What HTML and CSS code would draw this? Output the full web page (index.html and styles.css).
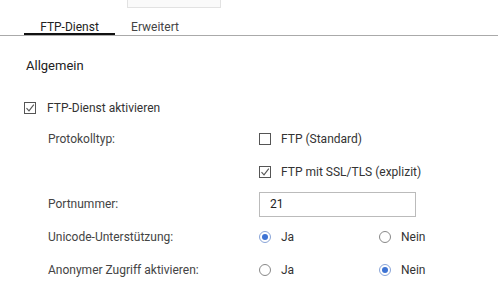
FILE: index.html
```html
<!DOCTYPE html>
<html lang="de">
<head>
  <meta charset="UTF-8">
  <title>FTP-Dienst</title>
  <link rel="stylesheet" href="styles.css">
</head>
<body>
  <div class="top-box"></div>

  <div class="tabs">
    <div class="tab active">FTP-Dienst</div>
    <div class="tab second">Erweitert</div>
  </div>

  <h3 class="section-title">Allgemein</h3>

  <label class="check main-check">
    <svg class="box" width="12" height="12" viewBox="0 0 12 12"><rect x="0.5" y="0.5" width="11" height="11" fill="#fff" stroke="#555"/><path d="M2.5 6.2 L5 8.8 L9.8 2.6" fill="none" stroke="#555" stroke-width="1.1"/></svg>
    <span>FTP-Dienst aktivieren</span>
  </label>

  <div class="form">
    <div class="label">Protokolltyp:</div>
    <div class="control">
      <label class="check">
        <svg class="box" width="12" height="12" viewBox="0 0 12 12"><rect x="0.5" y="0.5" width="11" height="11" fill="#fff" stroke="#555"/></svg>
        <span>FTP (Standard)</span>
      </label>
    </div>

    <div class="label"></div>
    <div class="control">
      <label class="check">
        <svg class="box" width="12" height="12" viewBox="0 0 12 12"><rect x="0.5" y="0.5" width="11" height="11" fill="#fff" stroke="#555"/><path d="M2.5 6.2 L5 8.8 L9.8 2.6" fill="none" stroke="#555" stroke-width="1.1"/></svg>
        <span>FTP mit SSL/TLS (explizit)</span>
      </label>
    </div>

    <div class="label">Portnummer:</div>
    <div class="control">
      <input class="port" type="text" value="21">
    </div>

    <div class="label">Unicode-Unterstützung:</div>
    <div class="control radios">
      <label class="radio"><span class="dot checked"></span>Ja</label>
      <label class="radio"><span class="dot"></span>Nein</label>
    </div>

    <div class="label">Anonymer Zugriff aktivieren:</div>
    <div class="control radios">
      <label class="radio"><span class="dot"></span>Ja</label>
      <label class="radio"><span class="dot checked"></span>Nein</label>
    </div>
  </div>

  <p class="note">Hinweis: Die Einstellungen werden für alle Verbindungen übernommen, die nach dem Speichern hergestellt werden.</p>
</body>
</html>
```

FILE: styles.css
```css
body { margin: 0; font-family: Roboto, "Liberation Sans", sans-serif; font-size: 12px; color: #333; background: #fff; overflow: hidden; }

.top-box { margin-left: 127px; width: 92px; height: 7px; border: 1px solid #e2e2e2; border-top: none; background: #fafafa; }

.tabs { display: flex; padding-left: 24px; border-bottom: 1px solid #aaa; }
.tab { padding-top: 13px; line-height: 12px; text-align: center; border-bottom: 2px solid transparent; color: #444; }
.tab.active { width: 91px; border-bottom-color: #111; color: #222; }
.tab.second { width: 80px; }

.section-title { margin: 0; padding: 21px 0 0 26px; font-size: 13px; font-weight: normal; line-height: 18px; color: #222; }

.check { display: flex; align-items: center; gap: 10px; color: #333; }
.box { flex: none; }
.main-check { margin: 25px 0 0 24px; height: 16px; gap: 11px; }

.form { display: grid; grid-template-columns: 211px 1fr; grid-template-rows: 33px 33px 32px 34px 32px; padding: 6px 0 0 48px; }
.label { display: flex; align-items: center; color: #444; }
.control { display: flex; align-items: center; }

.port { width: 157px; height: 25px; box-sizing: border-box; border: 1px solid #bbb; padding: 0 10px; font-family: inherit; font-size: 12px; color: #222; }

.radios .radio { display: flex; align-items: center; gap: 10px; width: 120px; color: #333; }
.dot { width: 12px; height: 12px; box-sizing: border-box; border: 1px solid #888; border-radius: 50%; position: relative; background: #fff; }
.dot.checked { border-color: #8aa5d8; }
.dot.checked::after { content: ""; position: absolute; left: 2px; top: 2px; width: 6px; height: 6px; border-radius: 50%; background: #3d73d4; }

.note { margin: 11px 0 0 32px; color: #8a96b4; line-height: 16px; }
```
